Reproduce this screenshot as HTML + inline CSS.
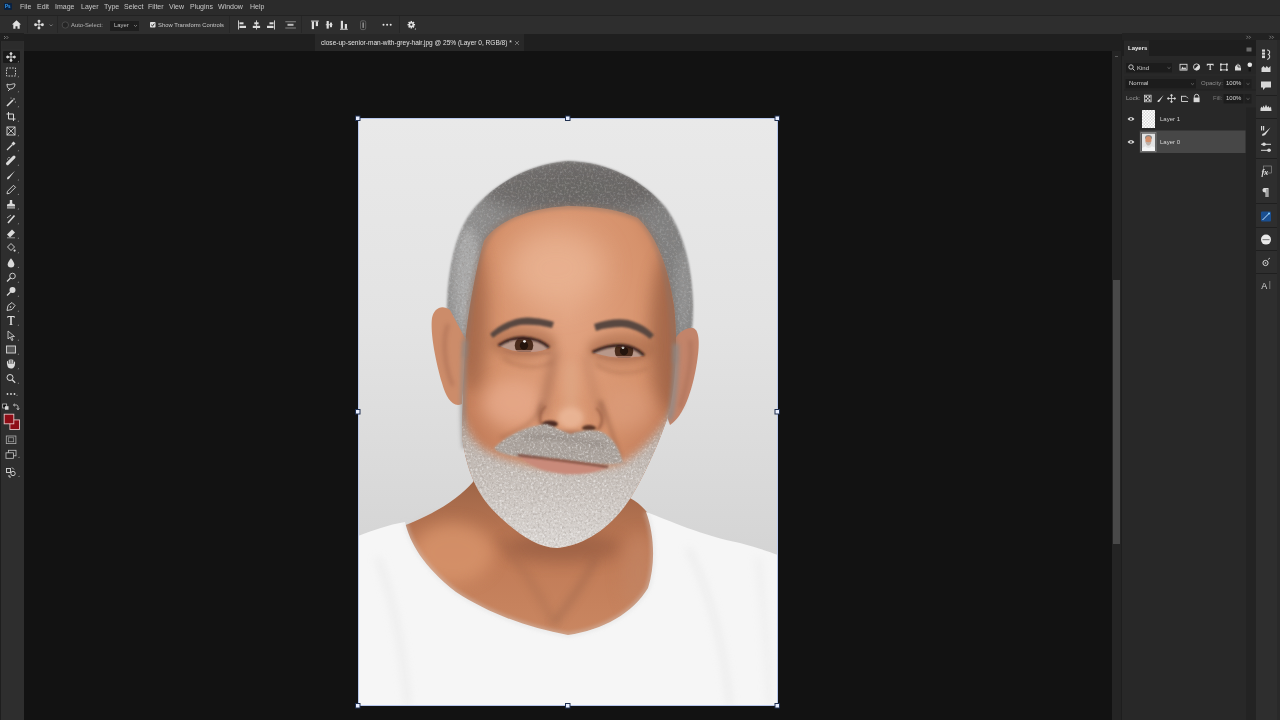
<!DOCTYPE html>
<html><head><meta charset="utf-8">
<style>
*{margin:0;padding:0;box-sizing:border-box}
html,body{width:1280px;height:720px;overflow:hidden;background:#121212;font-family:"Liberation Sans",sans-serif;color:#d6d6d6}
.a{position:absolute}
.t{position:absolute;white-space:nowrap;line-height:8px;will-change:transform}
#menubar{left:0;top:0;width:1280px;height:15px;background:#2b2b2b}
#menubar .t{top:3px;font-size:7px;color:#c8c8c8}
#opts{left:0;top:15px;width:1280px;height:19px;background:#2e2e2e;border-top:1px solid #222222}
#opts .t{font-size:5.85px;color:#c8c8c8}
.sep{position:absolute;top:0px;width:1px;height:17px;background:#262626}
#tabbar{left:24px;top:34px;width:1098px;height:17px;background:#1f1f1f}
#tab{left:315px;top:34px;width:209px;height:17px;background:#282828}
#tools{left:0;top:34px;width:24px;height:686px;background:#2e2e2e;border-left:1px solid #1e1e1e}
#canvas{left:24px;top:51px;width:1088px;height:669px;background:#121212}
#vscroll{left:1112px;top:51px;width:10px;height:669px;background:#242424}
#panel{left:1122px;top:33px;width:134px;height:687px;background:#282828}
#strip{left:1256px;top:33px;width:24px;height:687px;background:#2a2a2a}
#photo{left:358px;top:118px;width:420px;height:588px;overflow:hidden}
svg{display:block}
</style></head><body>
<div id="menubar" class="a">
<div class="a" style="left:4px;top:3px;width:8px;height:7px;background:#0a2140;border-radius:1px"></div>
<div class="t" style="left:5px;top:3px;font-size:4.5px;color:#36a4ff;font-weight:bold;line-height:7px">Ps</div>
<div class="t" style="left:20px">File</div>
<div class="t" style="left:37px">Edit</div>
<div class="t" style="left:55px">Image</div>
<div class="t" style="left:81px">Layer</div>
<div class="t" style="left:103.5px">Type</div>
<div class="t" style="left:123.5px">Select</div>
<div class="t" style="left:147.5px">Filter</div>
<div class="t" style="left:168.5px">View</div>
<div class="t" style="left:189.5px">Plugins</div>
<div class="t" style="left:218px">Window</div>
<div class="t" style="left:249.5px">Help</div>
</div>
<div id="opts" class="a">
<svg class="a" style="left:0;top:-1px" width="430" height="19" viewBox="0 15 430 19">
<g fill="#e0e0e0">
<path d="M16.5 20.3 L12 24.6 L13.3 24.6 L13.3 28.8 L15.5 28.8 L15.5 26.2 L17.5 26.2 L17.5 28.8 L19.7 28.8 L19.7 24.6 L21 24.6 Z"/>
</g>
<g stroke="#dcdcdc" stroke-width="1.1" fill="#dcdcdc">
<line x1="35.3" y1="24.7" x2="42.7" y2="24.7" stroke-width="0.9"/><line x1="39" y1="21" x2="39" y2="28.4" stroke-width="0.9"/>
<circle cx="39" cy="21.3" r="0.9"/><circle cx="39" cy="28.1" r="0.9"/><circle cx="35.6" cy="24.7" r="0.9"/><circle cx="42.4" cy="24.7" r="0.9"/>
</g>
<path d="M49.6 24.5 L51.1 26 L52.6 24.5" stroke="#8a8a8a" stroke-width="0.8" fill="none"/>
<circle cx="65.3" cy="25" r="3.2" stroke="#4a4a4a" stroke-width="1" fill="#242424"/>
<rect x="110" y="21" width="29" height="10" fill="#1e1e1e"/>
<path d="M134 25 L135.5 26.5 L137 25" stroke="#8a8a8a" stroke-width="0.8" fill="none"/>
<rect x="150" y="22" width="5.5" height="5.6" rx="0.8" fill="#e0e0e0"/>
<path d="M151.2 24.8 L152.5 26.1 L154.3 23.6" stroke="#2a2a2a" stroke-width="1" fill="none"/>
<g fill="#dcdcdc">
<rect x="238" y="20.4" width="0.9" height="9.1"/><rect x="239.5" y="22.3" width="4" height="2"/><rect x="239.5" y="25.8" width="6.5" height="2.2"/>
<rect x="256" y="20.4" width="0.9" height="9.1"/><rect x="254.3" y="22.3" width="4.3" height="2"/><rect x="252.8" y="25.8" width="7.3" height="2.2"/>
<rect x="274" y="20.4" width="0.9" height="9.1"/><rect x="269.5" y="22.3" width="4" height="2"/><rect x="267" y="25.8" width="6.5" height="2.2"/>
<rect x="285.3" y="21.4" width="10.6" height="0.8" fill="#9a9a9a"/><rect x="285.3" y="27.6" width="10.6" height="0.8" fill="#9a9a9a"/><rect x="287.5" y="23.8" width="6" height="2" fill="#bdbdbd"/>
<rect x="311" y="20.6" width="7.8" height="0.9"/><rect x="311.8" y="21.5" width="2.2" height="7.6"/><rect x="315.8" y="21.5" width="2.2" height="4.6"/>
<rect x="325.8" y="24.3" width="6.8" height="0.9"/><rect x="326.6" y="21" width="2.2" height="7.6"/><rect x="330" y="22.6" width="2" height="4.6"/>
<rect x="340" y="28.8" width="7.8" height="0.9"/><rect x="340.8" y="20.8" width="2.2" height="8"/><rect x="344.8" y="24" width="2.2" height="4.8"/>
</g>
<rect x="360.5" y="20.8" width="5.2" height="8.8" rx="1.5" stroke="#6a6a6a" stroke-width="0.8" fill="none"/>
<rect x="362.4" y="22.5" width="1.6" height="5.4" fill="#8a8a8a"/>
<g fill="#e4e4e4"><circle cx="383.5" cy="24.7" r="1"/><circle cx="387.1" cy="24.7" r="1"/><circle cx="390.7" cy="24.7" r="1"/></g>
<g transform="translate(411.3 24.7) scale(0.82)">
<circle r="3.2" fill="#e0e0e0"/>
<g fill="#e0e0e0"><rect x="-0.9" y="-4.6" width="1.8" height="9.2"/><rect x="-4.6" y="-0.9" width="9.2" height="1.8"/><rect x="-0.9" y="-4.6" width="1.8" height="9.2" transform="rotate(45)"/><rect x="-0.9" y="-4.6" width="1.8" height="9.2" transform="rotate(-45)"/></g>
<circle r="1.4" fill="#2a2a2a"/>
</g>
<path d="M414.5 29.6 L416 29.6 L416 28.1 Z" fill="#d0d0d0"/>
</svg>
<div class="sep" style="left:27px"></div>
<div class="sep" style="left:57px"></div>
<div class="sep" style="left:229px"></div>
<div class="sep" style="left:301px"></div>
<div class="sep" style="left:399px"></div>
<div class="t" style="left:71px;top:4.5px;color:#b4b4b4">Auto-Select:</div>
<div class="t" style="left:113.5px;top:4.5px;color:#c0c0c0">Layer</div>
<div class="t" style="left:158px;top:4.5px">Show Transform Controls</div>
</div>
<div id="tools" class="a"><svg class="a" style="left:-1px;top:-34px" width="24" height="720" viewBox="0 0 24 720"><rect x="0" y="33" width="24" height="8" fill="#202020"/><path d="M4 36 L5.5 37.5 L4 39 M6.5 36 L8 37.5 L6.5 39" stroke="#9a9a9a" stroke-width="0.7" fill="none"/><rect x="2" y="41" width="21" height="8" fill="#2c2c2c"/><rect x="3" y="51" width="17" height="12" fill="#1a1a1a" rx="1"/><g transform="translate(11 57)"><g stroke="#dadada" stroke-width="0.9" fill="#dadada"><line x1="-3.6" y1="0" x2="3.6" y2="0"/><line x1="0" y1="-3.6" x2="0" y2="3.6"/><circle cx="0" cy="-3.4" r="1"/><circle cx="0" cy="3.4" r="1"/><circle cx="-3.4" cy="0" r="1"/><circle cx="3.4" cy="0" r="1"/></g></g><g transform="translate(11 72)"><rect x="-4.5" y="-4" width="9" height="8" stroke="#dadada" stroke-width="0.9" stroke-dasharray="1.6 1.2" fill="none"/></g><g transform="translate(11 87)"><path d="M-4 -3 C-1 -1 2 -4 4 -3 C4 0 2 2 -1 2 C-3 2 -4 0 -4 -3 M-1 2 L-3 4" stroke="#dadada" stroke-width="0.9" fill="none"/></g><g transform="translate(11 102)"><path d="M-4 4 L2 -2" stroke="#dadada" stroke-width="1.6"/><g fill="#dadada"><circle cx="3" cy="-3" r="0.8"/><circle cx="0" cy="-4" r="0.5"/><circle cx="4.3" cy="0" r="0.5"/></g></g><g transform="translate(11 116.5)"><path d="M-2.5 -4.5 L-2.5 2.5 L4.5 2.5 M-4.5 -2.5 L2.5 -2.5 L2.5 4.5" stroke="#dadada" stroke-width="1" fill="none"/></g><g transform="translate(11 131)"><rect x="-4" y="-4" width="8" height="8" stroke="#dadada" stroke-width="0.9" fill="none"/><path d="M-4 -4 L4 4 M4 -4 L-4 4" stroke="#dadada" stroke-width="0.8"/></g><g transform="translate(11 146)"><path d="M-4 4 L1.5 -1.5" stroke="#dadada" stroke-width="1.2"/><path d="M0.5 -2.5 L2.5 -4.5 L4.5 -2.5 L2.5 -0.5 Z" fill="#dadada"/></g><g transform="translate(11 160.6)"><path d="M-3.5 3 L3 -3.5" stroke="#dadada" stroke-width="3" stroke-linecap="round"/><circle cx="-2" cy="-3" r="0.7" fill="#dadada"/><circle cx="-3.5" cy="-1.5" r="0.5" fill="#dadada"/></g><g transform="translate(11 175.2)"><path d="M-4 4 C-4 2 -3 1 -2 1 L4 -4.5 L-1 2 C-1.5 3.5 -3 4.3 -4 4 Z" fill="#dadada"/></g><g transform="translate(11 189.8)"><path d="M-4 4 L-3.5 1.5 L2.5 -4.5 L4.5 -2.5 L-1.5 3.5 Z" stroke="#dadada" stroke-width="0.9" fill="none"/></g><g transform="translate(11 204.4)"><path d="M-1.2 -4.5 L1.2 -4.5 L1.2 -1 L4 0 L4 2 L-4 2 L-4 0 L-1.2 -1 Z" fill="#dadada"/><rect x="-4" y="3" width="8" height="1" fill="#dadada"/></g><g transform="translate(11 219)"><path d="M-3 4 L3.5 -3.5" stroke="#dadada" stroke-width="1.6"/><path d="M-4 -1 L0 -4" stroke="#dadada" stroke-width="0.8"/></g><g transform="translate(11 233.5)"><path d="M-4 2 L1 -3 L4 0 L-1 5 Z" fill="#dadada" transform="translate(0 -1)"/><line x1="-4" y1="4.3" x2="4" y2="4.3" stroke="#dadada" stroke-width="0.6"/></g><g transform="translate(11 248)"><path d="M-3.5 -1 L0 -4.5 L3.5 -1 L0 2.5 Z" stroke="#dadada" stroke-width="0.9" fill="none"/><circle cx="3.6" cy="2.6" r="1.1" fill="#dadada"/></g><g transform="translate(11 262.7)"><path d="M0 -4.5 C2 -2 3.3 0 3.3 1.5 A3.3 3.3 0 0 1 -3.3 1.5 C-3.3 0 -2 -2 0 -4.5 Z" fill="#dadada"/></g><g transform="translate(11 277.5)"><circle cx="1.5" cy="-1.5" r="2.8" stroke="#dadada" stroke-width="0.9" fill="none"/><path d="M-4 4 L-0.5 0.5" stroke="#dadada" stroke-width="1.2"/></g><g transform="translate(11 291.5)"><circle cx="1.5" cy="-1.5" r="3" fill="#dadada"/><path d="M-4 4 L-0.5 0.5" stroke="#dadada" stroke-width="1.2"/></g><g transform="translate(11 306.5)"><path d="M-4 4 L-3 -1 L1 -4 L4 -1 L1 3 Z" stroke="#dadada" stroke-width="0.9" fill="none"/><circle cx="-0.5" cy="0.5" r="0.8" fill="#dadada"/></g><g transform="translate(11 320.5)"><path d="M-3.6 -4.5 L3.6 -4.5 L3.6 -2.6 L3 -2.6 L2.6 -3.5 L0.8 -3.5 L0.8 3.8 L1.8 4.2 L1.8 4.6 L-1.8 4.6 L-1.8 4.2 L-0.8 3.8 L-0.8 -3.5 L-2.6 -3.5 L-3 -2.6 L-3.6 -2.6 Z" fill="#dadada"/></g><g transform="translate(11 335.5)"><path d="M-3 -4.5 L3.5 1 L0.5 1 L2 4.5 L0.8 5 L-0.8 1.5 L-3 3.5 Z" stroke="#dadada" stroke-width="0.8" fill="#333"/></g><g transform="translate(11 349.5)"><rect x="-4.5" y="-3.5" width="9" height="7" stroke="#dadada" stroke-width="0.9" fill="#555"/></g><g transform="translate(11 364)"><path d="M-3.5 0 L-3.5 -2.5 M-1.7 -1 L-1.7 -4 M0 -1 L0 -4.5 M1.7 -1 L1.7 -4 M3.5 0 L3.5 -2" stroke="#dadada" stroke-width="1.1" stroke-linecap="round"/><path d="M-3.8 -0.5 L3.8 -0.5 L3.8 1.5 C3 4 1.5 4.5 0 4.5 C-2 4.5 -3.5 3.5 -3.8 1 Z" fill="#dadada"/></g><g transform="translate(11 378.5)"><circle cx="-1" cy="-1" r="3" stroke="#dadada" stroke-width="1" fill="none"/><path d="M1.2 1.2 L4.2 4.2" stroke="#dadada" stroke-width="1.3"/></g><path d="M17.5 62.2 L19 62.2 L19 60.7 Z" fill="#8a8a8a"/><path d="M17.5 77.2 L19 77.2 L19 75.7 Z" fill="#8a8a8a"/><path d="M17.5 92.2 L19 92.2 L19 90.7 Z" fill="#8a8a8a"/><path d="M17.5 107.2 L19 107.2 L19 105.7 Z" fill="#8a8a8a"/><path d="M17.5 121.7 L19 121.7 L19 120.2 Z" fill="#8a8a8a"/><path d="M17.5 136.2 L19 136.2 L19 134.7 Z" fill="#8a8a8a"/><path d="M17.5 151.2 L19 151.2 L19 149.7 Z" fill="#8a8a8a"/><path d="M17.5 165.79999999999998 L19 165.79999999999998 L19 164.29999999999998 Z" fill="#8a8a8a"/><path d="M17.5 180.39999999999998 L19 180.39999999999998 L19 178.89999999999998 Z" fill="#8a8a8a"/><path d="M17.5 195.0 L19 195.0 L19 193.5 Z" fill="#8a8a8a"/><path d="M17.5 209.6 L19 209.6 L19 208.1 Z" fill="#8a8a8a"/><path d="M17.5 224.2 L19 224.2 L19 222.7 Z" fill="#8a8a8a"/><path d="M17.5 238.7 L19 238.7 L19 237.2 Z" fill="#8a8a8a"/><path d="M17.5 253.2 L19 253.2 L19 251.7 Z" fill="#8a8a8a"/><path d="M17.5 267.9 L19 267.9 L19 266.4 Z" fill="#8a8a8a"/><path d="M17.5 282.7 L19 282.7 L19 281.2 Z" fill="#8a8a8a"/><path d="M17.5 296.7 L19 296.7 L19 295.2 Z" fill="#8a8a8a"/><path d="M17.5 311.7 L19 311.7 L19 310.2 Z" fill="#8a8a8a"/><path d="M17.5 325.7 L19 325.7 L19 324.2 Z" fill="#8a8a8a"/><path d="M17.5 340.7 L19 340.7 L19 339.2 Z" fill="#8a8a8a"/><path d="M17.5 354.7 L19 354.7 L19 353.2 Z" fill="#8a8a8a"/><path d="M17.5 369.2 L19 369.2 L19 367.7 Z" fill="#8a8a8a"/><path d="M17.5 383.7 L19 383.7 L19 382.2 Z" fill="#8a8a8a"/><g fill="#dadada"><circle cx="7.5" cy="394" r="0.9"/><circle cx="11" cy="394" r="0.9"/><circle cx="14.5" cy="394" r="0.9"/></g><path d="M16 396 L17.5 396 L17.5 394.5 Z" fill="#8a8a8a"/><rect x="2.7" y="404" width="4" height="4" fill="#111" stroke="#dadada" stroke-width="0.7"/><rect x="5" y="406.2" width="3.5" height="3.5" fill="#dadada"/><path d="M13.5 405 L16.5 405 C17.5 405 18 406 18 407 L18 409.5 M16.8 408.3 L18 409.8 L19.2 408.3 M14.8 403.8 L13.5 405 L14.8 406.2" stroke="#dadada" stroke-width="0.8" fill="none"/><rect x="9.9" y="419.9" width="9.6" height="9.6" fill="#8e0c16" stroke="#e6c2c4" stroke-width="0.9"/><rect x="4.2" y="414.2" width="9.6" height="9.6" fill="#8e0c16" stroke="#e6c2c4" stroke-width="0.9"/><rect x="6.3" y="436" width="9.6" height="7.6" stroke="#b0b0b0" stroke-width="0.8" fill="none"/><rect x="8.5" y="437.8" width="5.2" height="4" stroke="#b0b0b0" stroke-width="0.6" fill="none"/><rect x="8.5" y="450.3" width="7.5" height="5.5" stroke="#c8c8c8" stroke-width="0.8" fill="#262626"/><rect x="6" y="452.8" width="7.5" height="5.5" stroke="#c8c8c8" stroke-width="0.8" fill="#262626"/><path d="M18 458 L19.5 458 L19.5 456.5 Z" fill="#8a8a8a"/><g stroke="#dadada" stroke-width="0.9" fill="none"><rect x="6.5" y="468.5" width="4" height="4"/><circle cx="13" cy="473.5" r="2.2"/><path d="M9 475 L9 477 L11 477"/><path d="M12 467.5 L14 469.5"/></g><path d="M18 477 L19.5 477 L19.5 475.5 Z" fill="#8a8a8a"/></svg></div>
<div id="tabbar" class="a"></div>
<div id="tab" class="a">
<div class="t" style="left:5.5px;top:5px;font-size:6.55px;color:#e2e2e2">close-up-senior-man-with-grey-hair.jpg @ 25% (Layer 0, RGB/8) *</div>
<svg class="a" style="left:199px;top:6px" width="6" height="6"><path d="M1 1 L5 5 M5 1 L1 5" stroke="#8a8a8a" stroke-width="0.8"/></svg>
</div>
<div id="canvas" class="a"></div>
<div id="vscroll" class="a">
<div class="a" style="left:0.5px;top:228.5px;width:7px;height:264px;background:#494949"></div><div class="a" style="left:8.5px;top:-17px;width:1.5px;height:686px;background:#1e1e1e"></div>
<div class="a" style="left:3px;top:5px;width:3px;height:1px;background:#5a5a5a"></div>
</div>
<div id="panel" class="a">
<svg class="a" style="left:0;top:0" width="134" height="687" viewBox="1122 33 134 687">
<rect x="1122" y="33" width="134" height="7" fill="#222222"/>
<path d="M1246.5 35.8 L1248 37.3 L1246.5 38.8 M1249 35.8 L1250.5 37.3 L1249 38.8" stroke="#9a9a9a" stroke-width="0.7" fill="none"/>
<rect x="1122" y="40" width="134" height="16" fill="#1e1e1e"/>
<rect x="1124" y="40.5" width="25" height="15.5" fill="#282828"/>
<rect x="1246.5" y="47.5" width="5" height="4" fill="#6a6a6a"/>
<rect x="1124" y="60" width="132" height="14" fill="#262626"/>
<rect x="1126" y="63" width="46" height="9.5" fill="#1c1c1c"/>
<circle cx="1131" cy="67" r="2.2" stroke="#cfcfcf" stroke-width="0.9" fill="none"/><path d="M1132.6 68.6 L1134.5 70.5" stroke="#cfcfcf" stroke-width="1"/>
<path d="M1167.5 67.3 L1169 68.6 L1170.5 67.3" stroke="#777" stroke-width="0.7" fill="none"/>
<g fill="none" stroke="#d8d8d8" stroke-width="0.9">
<rect x="1180" y="64.3" width="7" height="5.8"/>
<circle cx="1196.6" cy="67" r="3.1"/>
<rect x="1220.8" y="64.3" width="6" height="5.6"/>
</g>
<path d="M1181 69.5 L1182.5 66.5 L1184 68.5 L1185 67 L1186.5 69.5 Z" fill="#d8d8d8"/>
<path d="M1194.4 69.2 L1198.8 64.8 A3.1 3.1 0 0 1 1194.4 69.2 Z" fill="#d8d8d8"/>
<path d="M1206.8 63.8 L1213.6 63.8 L1213.6 65.8 L1212.8 65.8 L1212.6 64.9 L1210.8 64.9 L1210.8 69.6 L1211.8 70 L1208.6 70 L1209.6 69.6 L1209.6 64.9 L1207.8 64.9 L1207.6 65.8 L1206.8 65.8 Z" fill="#d8d8d8"/>
<g fill="#d8d8d8"><rect x="1220" y="63.5" width="1.8" height="1.8"/><rect x="1226" y="63.5" width="1.8" height="1.8"/><rect x="1220" y="69" width="1.8" height="1.8"/><rect x="1226" y="69" width="1.8" height="1.8"/></g>
<path d="M1235 70.5 L1235 66.5 L1238 63.5 L1241 66.5 L1241 70.5 Z" fill="#d8d8d8"/><path d="M1238 63.5 L1238 67 L1241 67" stroke="#262626" stroke-width="0.8" fill="none"/>
<circle cx="1249.8" cy="64.8" r="2.3" fill="#e6e6e6"/><rect x="1248.6" y="67.5" width="2.4" height="4" fill="#141414"/>
<rect x="1124" y="76" width="132" height="13" fill="#262626"/>
<rect x="1125.5" y="79" width="70.5" height="9.5" fill="#1c1c1c"/>
<path d="M1191 83.3 L1192.5 84.6 L1194 83.3" stroke="#777" stroke-width="0.7" fill="none"/>
<rect x="1223.5" y="79" width="20" height="9.5" fill="#1c1c1c"/>
<rect x="1244.5" y="79" width="7" height="9.5" fill="#1f1f1f"/>
<path d="M1246.5 83.3 L1248 84.6 L1249.5 83.3" stroke="#777" stroke-width="0.7" fill="none"/>
<rect x="1124" y="89.5" width="132" height="0.8" fill="#1e1e1e"/>
<rect x="1223.5" y="94" width="20" height="9.5" fill="#1c1c1c"/>
<rect x="1244.5" y="94" width="7" height="9.5" fill="#1f1f1f"/>
<path d="M1246.5 98.3 L1248 99.6 L1249.5 98.3" stroke="#777" stroke-width="0.7" fill="none"/>
<g fill="#d8d8d8">
<rect x="1144.5" y="95.2" width="6.6" height="6.6" fill="none" stroke="#d8d8d8" stroke-width="0.8"/>
<rect x="1145.3" y="96" width="1.7" height="1.7"/><rect x="1148.6" y="96" width="1.7" height="1.7"/><rect x="1147" y="97.7" width="1.7" height="1.7"/><rect x="1145.3" y="99.3" width="1.7" height="1.7"/><rect x="1148.6" y="99.3" width="1.7" height="1.7"/>
</g>
<path d="M1157.5 102 C1157.5 100.5 1158.3 99.8 1159 99.8 L1163.6 95 L1160 100.8 C1159.6 101.9 1158.6 102.3 1157.5 102 Z" fill="#d8d8d8"/>
<g stroke="#d8d8d8" stroke-width="0.8" fill="#d8d8d8"><line x1="1168" y1="98.5" x2="1175" y2="98.5"/><line x1="1171.5" y1="95" x2="1171.5" y2="102"/><circle cx="1168.3" cy="98.5" r="0.8"/><circle cx="1174.7" cy="98.5" r="0.8"/><circle cx="1171.5" cy="95.3" r="0.8"/><circle cx="1171.5" cy="101.7" r="0.8"/></g>
<path d="M1181.5 96 L1181.5 101.5 L1188 101.5 M1181 96.3 L1186 96.3 L1188 98.3" stroke="#d8d8d8" stroke-width="0.9" fill="none"/>
<path d="M1194.4 97.8 L1194.4 96.5 A2.2 2.2 0 0 1 1198.8 96.5 L1198.8 97.8" stroke="#d8d8d8" stroke-width="0.9" fill="none"/><rect x="1193.6" y="97.6" width="6" height="4.6" fill="#d8d8d8"/>
<rect x="1124" y="107.5" width="122" height="612.5" fill="#282828"/>
<rect x="1139.7" y="130.5" width="105.8" height="22.5" fill="#474747"/>
<rect x="1246" y="107.5" width="10" height="612.5" fill="#232323"/>
<g fill="#d8d8d8">
<path d="M1127.6 119 C1129 116.8 1133 116.8 1134.4 119 C1133 121.2 1129 121.2 1127.6 119 Z"/>
<path d="M1127.6 142 C1129 139.8 1133 139.8 1134.4 142 C1133 144.2 1129 144.2 1127.6 142 Z"/>
</g>
<circle cx="1131" cy="119" r="1.1" fill="#282828"/><circle cx="1131" cy="142" r="1.1" fill="#474747"/>
<defs><pattern id="chk" width="3" height="3" patternUnits="userSpaceOnUse" x="1142" y="110"><rect width="3" height="3" fill="#ffffff"/><rect width="1.5" height="1.5" fill="#d8d8d8"/><rect x="1.5" y="1.5" width="1.5" height="1.5" fill="#d8d8d8"/></pattern></defs>
<rect x="1142" y="110" width="13" height="18" fill="url(#chk)"/>
<rect x="1140.8" y="132.6" width="15.2" height="19.2" fill="none" stroke="#8a8a8a" stroke-width="0.8"/>
<rect x="1142" y="133.6" width="13" height="17.4" fill="#e2e2e2"/>
<ellipse cx="1148.5" cy="137.6" rx="3.4" ry="2.6" fill="#858585"/>
<ellipse cx="1148.4" cy="140.2" rx="3" ry="4" fill="#d28e6a"/>
<path d="M1145.6 141.5 C1146 144.5 1147.5 145.6 1148.3 145.6 C1149.3 145.6 1150.8 144.5 1151.2 141.5 C1150 142.6 1147 142.6 1145.6 141.5 Z" fill="#bab2ac"/>
<path d="M1142 148 L1145.5 146.3 C1146.5 148.5 1150.5 148.5 1151.5 146.3 L1155 147.5 L1155 151 L1142 151 Z" fill="#f4f4f4"/>
</svg>
<div class="t" style="left:5.5px;top:11px;font-size:6px;color:#ececec;font-weight:bold">Layers</div>
<div class="t" style="left:14.5px;top:30.5px;font-size:6px;color:#cfcfcf">Kind</div>
<div class="t" style="left:6.5px;top:46px;font-size:6px;color:#d0d0d0">Normal</div>
<div class="t" style="left:79px;top:46px;font-size:6px;color:#8e8e8e">Opacity:</div>
<div class="t" style="left:104px;top:46px;font-size:6px;color:#d6d6d6">100%</div>
<div class="t" style="left:4px;top:61px;font-size:6px;color:#9a9a9a">Lock:</div>
<div class="t" style="left:91px;top:61px;font-size:6px;color:#7a7a7a">Fill:</div>
<div class="t" style="left:104px;top:61px;font-size:6px;color:#d6d6d6">100%</div>
<div class="t" style="left:38px;top:82px;font-size:6px;color:#d0d0d0">Layer 1</div>
<div class="t" style="left:38px;top:105px;font-size:6px;color:#d8d8d8">Layer 0</div>
</div>
<div id="strip" class="a">
<svg class="a" style="left:0;top:0;will-change:transform" width="24" height="687" viewBox="1256 33 24 687">
<rect x="1256" y="33" width="24" height="7" fill="#222222"/>
<path d="M1269.5 35.8 L1271 37.3 L1269.5 38.8 M1272 35.8 L1273.5 37.3 L1272 38.8" stroke="#9a9a9a" stroke-width="0.7" fill="none"/>
<rect x="1256" y="40" width="21.5" height="680" fill="#2e2e2e"/>
<rect x="1277.5" y="40" width="2.5" height="680" fill="#292929"/>
<g fill="#1f1f1f"><rect x="1256" y="95" width="21" height="1"/><rect x="1256" y="118" width="21" height="1"/><rect x="1256" y="158" width="21" height="1"/><rect x="1256" y="203" width="21" height="1"/><rect x="1256" y="227" width="21" height="1"/><rect x="1256" y="250" width="21" height="1"/><rect x="1256" y="273" width="21" height="1"/></g>
<g fill="#d8d8d8">
<rect x="1262" y="49.5" width="3" height="2.2"/><rect x="1262" y="52.5" width="3" height="2.2"/><rect x="1262" y="55.5" width="3" height="2.6"/>
<path d="M1267 50 C1270 50 1270.5 53 1268.5 54.5 C1270.5 55.5 1270 59 1267.2 59.5" stroke="#d8d8d8" stroke-width="1.1" fill="none"/>
<path d="M1261.5 72 L1261.5 68 L1263.5 66 L1265.2 68 L1266.8 66 L1268.5 68 L1270.5 66 L1270.5 72 Z"/>
<path d="M1261 81.5 L1271 81.5 L1271 87.5 L1265.5 87.5 L1263 90 L1263 87.5 L1261 87.5 Z"/>
<path d="M1260.5 111 L1260.5 108.5 L1261.5 106.5 L1262.5 108 L1263.5 105.5 L1264.7 107.8 L1266 104.5 L1267.3 107.5 L1268.5 106 L1269.7 108 L1271 106.5 L1271.5 111 Z"/>
<rect x="1261" y="126" width="1.2" height="4.5"/><rect x="1263" y="126" width="1.2" height="4.5"/>
<path d="M1262 135.5 C1262 134 1263 133.2 1264 133.2 L1270.5 127.5 L1265.5 134.5 C1265 135.5 1263.5 136 1262 135.5 Z"/>
<rect x="1261" y="143.8" width="10" height="1"/><circle cx="1264" cy="144.3" r="1.8"/>
<rect x="1261" y="149.8" width="10" height="1"/><circle cx="1269" cy="150.3" r="1.8"/>
</g>
<rect x="1263.5" y="166" width="8" height="7" fill="none" stroke="#9a9a9a" stroke-width="0.6"/><text x="1261.5" y="175" font-family="Liberation Serif" font-style="italic" font-weight="bold" font-size="8" fill="#e0e0e0">fx</text>
<path d="M1264 188 L1268.5 188 L1268.5 197 L1267.3 197 L1267.3 189 L1266.7 189 L1266.7 197 L1265.5 197 L1265.5 192.5 C1263.5 192.5 1262.5 191.5 1262.5 190.2 C1262.5 189 1263.3 188 1264 188 Z" fill="#d8d8d8"/>
<rect x="1261" y="211.5" width="10" height="10" rx="1" fill="#1a4f90"/>
<path d="M1262.5 220 L1269.5 213" stroke="#bfe0ff" stroke-width="1"/><circle cx="1269" cy="213.6" r="1" fill="#7fd0ff"/>
<circle cx="1266" cy="239.6" r="5" fill="#e8e8e8"/>
<rect x="1262.5" y="239" width="7" height="1.2" fill="#888"/>
<circle cx="1265.5" cy="263" r="2.6" stroke="#d8d8d8" stroke-width="1" fill="none"/><circle cx="1265.5" cy="263" r="0.8" fill="#d8d8d8"/>
<path d="M1268 259.5 L1270 258" stroke="#d8d8d8" stroke-width="0.8"/>
<text x="1261.3" y="289" font-family="Liberation Sans" font-size="9" fill="#d8d8d8">A</text>
<rect x="1269.5" y="281" width="0.7" height="8" fill="#999"/>
</svg>
</div>
<div id="photo" class="a">
<svg width="420" height="588" viewBox="0 0 420 588">
<defs>
<linearGradient id="bg" x1="0" y1="0" x2="0" y2="1">
<stop offset="0" stop-color="#e9e9e9"/><stop offset="0.35" stop-color="#e3e3e3"/><stop offset="0.6" stop-color="#dadada"/><stop offset="0.8" stop-color="#d2d2d2"/><stop offset="1" stop-color="#c8c8c8"/>
</linearGradient>
<radialGradient id="skin" cx="0.5" cy="0.32" r="0.7">
<stop offset="0" stop-color="#e2a482"/><stop offset="0.55" stop-color="#d6926c"/><stop offset="1" stop-color="#b46e4e"/>
</radialGradient>
<linearGradient id="neckg" x1="0" y1="0" x2="0" y2="1">
<stop offset="0" stop-color="#9c6446"/><stop offset="0.4" stop-color="#c07a56"/><stop offset="1" stop-color="#cc8a64"/>
</linearGradient>
<linearGradient id="beardg" x1="0" y1="0" x2="0" y2="1">
<stop offset="0" stop-color="#b0a094"/><stop offset="0.4" stop-color="#c2bab4"/><stop offset="1" stop-color="#dedad7"/>
</linearGradient>
<linearGradient id="hairg" x1="0" y1="0" x2="1" y2="0">
<stop offset="0" stop-color="#949494"/><stop offset="0.5" stop-color="#7c7a79"/><stop offset="1" stop-color="#828282"/>
</linearGradient>
<filter id="b1" filterUnits="userSpaceOnUse" x="-50" y="-50" width="520" height="688"><feGaussianBlur stdDeviation="0.8"/></filter>
<filter id="b2" filterUnits="userSpaceOnUse" x="-50" y="-50" width="520" height="688"><feGaussianBlur stdDeviation="2"/></filter>
<filter id="b4" filterUnits="userSpaceOnUse" x="-50" y="-50" width="520" height="688"><feGaussianBlur stdDeviation="4"/></filter>
<filter id="b8" filterUnits="userSpaceOnUse" x="-50" y="-50" width="520" height="688"><feGaussianBlur stdDeviation="8"/></filter>
<filter id="b14" filterUnits="userSpaceOnUse" x="-50" y="-50" width="520" height="688"><feGaussianBlur stdDeviation="14"/></filter>
<filter id="texW" filterUnits="userSpaceOnUse" x="0" y="0" width="420" height="588">
<feTurbulence type="fractalNoise" baseFrequency="0.45" numOctaves="2" seed="3"/>
<feColorMatrix type="matrix" values="0 0 0 0 1  0 0 0 0 1  0 0 0 0 1  2.2 0 0 0 -1.05"/>
<feComposite in2="SourceAlpha" operator="in"/>
</filter>
<filter id="texD" filterUnits="userSpaceOnUse" x="0" y="0" width="420" height="588">
<feTurbulence type="fractalNoise" baseFrequency="0.45" numOctaves="2" seed="7"/>
<feColorMatrix type="matrix" values="0 0 0 0 0.25  0 0 0 0 0.22  0 0 0 0 0.2  2.2 0 0 0 -1.05"/>
<feComposite in2="SourceAlpha" operator="in"/>
</filter>
<clipPath id="hairclip"><path d="M100 272 C94 240 88 205 89 185 C90 150 98 110 118 88 C140 64 172 46 210 43 C250 44 285 62 308 90 C326 115 334 150 335 188 C335 215 330 250 320 286 L300 290 L120 290 Z"/></clipPath>
<clipPath id="faceclip"><path d="M210 88 C172 90 140 102 126 123 C118 150 112 185 108 216 C106 250 104 290 104 318 C108 350 118 378 143 400 C160 416 180 430 199 430 C225 428 255 410 275 376 C290 350 302 322 311 296 C318 262 320 225 316 188 C310 150 300 120 280 100 C262 92 240 88 210 88 Z"/></clipPath>
<clipPath id="neckclip"><path d="M40 405 L112 350 L288 375 L296 394 C298 430 296 455 290 470 C275 495 245 512 210 517 C170 510 130 495 98 474 C65 448 52 425 47 404 Z"/></clipPath>
<clipPath id="beardclip"><path d="M104 296 C108 340 118 372 143 400 C160 416 180 430 199 430 C225 428 255 410 275 376 C290 345 300 320 310 288 L310 460 L100 460 Z"/></clipPath>
<clipPath id="beardshape"><path d="M100 290 C115 315 135 330 160 338 C185 350 230 352 262 340 C280 330 295 310 312 285 L312 460 L100 460 Z"/></clipPath>
<clipPath id="mclip"><path d="M136 330 C148 318 168 308 188 306 C198 309 205 314 213 316 C222 313 234 310 246 315 C256 321 262 332 265 345 C245 348 225 345 205 342 C185 340 165 340 150 337 C142 335 138 333 136 330 Z"/></clipPath>
<mask id="beardmask" maskUnits="userSpaceOnUse" x="0" y="0" width="420" height="588">
<path d="M96 300 C112 325 132 338 160 344 C185 352 230 354 262 346 C282 336 298 316 316 292 L316 460 L96 460 Z" fill="#fff" filter="url(#b4)"/>
<path d="M98 290 C108 300 118 320 122 345 L100 350 Z" fill="#fff" opacity="0.5" filter="url(#b4)"/>
</mask>
<clipPath id="eyeL"><path d="M140.5 227.5 C150 221 160 219.5 166 219.8 C176 220.5 185 224 191 229.5 C185 233.5 176 234 166 233.8 C156 233.5 148 231 140.5 227.5 Z"/></clipPath>
<clipPath id="eyeR"><path d="M234.5 234.2 C245 229 255 227 263 227.2 C273 228 281 232 286 237.3 C279 239.5 270 239.8 261 239.6 C251 239 242 237 234.5 234.2 Z"/></clipPath>
</defs>
<rect width="420" height="588" fill="url(#bg)"/>
<!-- hair -->
<path d="M100 272 C94 240 88 205 89 185 C90 150 98 110 118 88 C140 64 172 46 210 43 C250 44 285 62 308 90 C326 115 334 150 335 188 C335 215 330 250 320 286 L300 290 L120 290 Z" fill="url(#hairg)" filter="url(#b1)"/>
<g clip-path="url(#hairclip)">
<ellipse cx="110" cy="165" rx="14" ry="55" fill="#b6b6b6" opacity="0.7" filter="url(#b4)"/>
<ellipse cx="215" cy="70" rx="95" ry="26" fill="#5e5c5a" opacity="0.65" filter="url(#b8)"/>
<ellipse cx="326" cy="175" rx="8" ry="45" fill="#a2a2a2" opacity="0.5" filter="url(#b4)"/>
<rect x="80" y="40" width="260" height="250" fill="#fff" filter="url(#texW)" opacity="0.25"/><rect x="80" y="40" width="260" height="250" fill="#fff" filter="url(#texD)" opacity="0.5"/>
</g>
<!-- ears -->
<path d="M104 286 C95 290 88 280 84 265 C78 245 72 215 74 200 C76 190 84 186 92 192 L108 222 Z" fill="#cc8c6a"/>
<path d="M90 206 C84 222 86 248 95 268" stroke="#a46850" stroke-width="3" fill="none" opacity="0.7" filter="url(#b2)"/>
<path d="M314 228 C317 216 327 209 335 210 C342 212 342 228 338 250 C334 272 326 298 312 307 L306 290 Z" fill="#c2846a"/>
<path d="M332 222 C335 240 330 262 322 290" stroke="#a06650" stroke-width="3" fill="none" opacity="0.6" filter="url(#b2)"/>
<!-- neck -->
<path d="M118 360 C105 378 80 395 40 410 L60 540 L300 540 C300 470 298 420 292 398 C286 390 280 384 272 380 Z" fill="url(#neckg)"/>
<g clip-path="url(#neckclip)">
<ellipse cx="205" cy="430" rx="60" ry="14" fill="#7a4a34" opacity="0.45" filter="url(#b8)"/>
<ellipse cx="95" cy="435" rx="40" ry="30" fill="#d8946c" opacity="0.8" filter="url(#b8)"/>
<ellipse cx="280" cy="455" rx="16" ry="40" fill="#c28464" opacity="0.7" filter="url(#b8)"/>
<path d="M238 440 C225 468 208 488 196 506" stroke="#8a5a44" stroke-width="5" fill="none" opacity="0.5" filter="url(#b4)"/>
<path d="M140 420 C160 445 180 470 195 505" stroke="#9a6448" stroke-width="6" fill="none" opacity="0.35" filter="url(#b4)"/>
</g>
<!-- face -->
<path d="M210 88 C172 90 140 102 126 123 C118 150 112 185 108 216 C106 250 104 290 104 318 C108 350 118 378 143 400 C160 416 180 430 199 430 C225 428 255 410 275 376 C290 350 302 322 311 296 C318 262 320 225 316 188 C310 150 300 120 280 100 C262 92 240 88 210 88 Z" fill="url(#skin)"/>
<g clip-path="url(#faceclip)">
<ellipse cx="198" cy="150" rx="48" ry="38" fill="#ecb898" opacity="0.7" filter="url(#b14)"/>
<ellipse cx="114" cy="200" rx="16" ry="75" fill="#955c40" opacity="0.65" filter="url(#b8)"/>
<ellipse cx="312" cy="215" rx="20" ry="80" fill="#955c40" opacity="0.7" filter="url(#b8)"/>
<ellipse cx="165" cy="225" rx="34" ry="16" fill="#a26646" opacity="0.5" filter="url(#b4)"/>
<ellipse cx="263" cy="231" rx="34" ry="16" fill="#a26646" opacity="0.5" filter="url(#b4)"/>
<path d="M145 240 C158 250 180 252 195 244" stroke="#a06648" stroke-width="3" fill="none" opacity="0.45" filter="url(#b2)"/>
<path d="M238 246 C250 256 272 258 290 250" stroke="#a06648" stroke-width="3" fill="none" opacity="0.45" filter="url(#b2)"/>
<ellipse cx="155" cy="285" rx="30" ry="24" fill="#e8ac8e" opacity="0.75" filter="url(#b8)"/>
<ellipse cx="270" cy="290" rx="24" ry="22" fill="#dc9e7e" opacity="0.6" filter="url(#b8)"/>
<!-- nose -->
<path d="M197 232 C193 255 188 278 184 298" stroke="#9a6248" stroke-width="9" fill="none" opacity="0.5" filter="url(#b4)"/>
<path d="M228 238 C232 258 238 280 242 300" stroke="#a86e52" stroke-width="6" fill="none" opacity="0.4" filter="url(#b4)"/>
<ellipse cx="213" cy="270" rx="8" ry="28" fill="#e0aa88" opacity="0.6" filter="url(#b4)"/>
<ellipse cx="212" cy="299" rx="14" ry="12" fill="#e4ae8e" opacity="0.75" filter="url(#b4)"/>
<path d="M184 284 C180 296 180 306 186 310" stroke="#8a5440" stroke-width="3" fill="none" opacity="0.5" filter="url(#b2)"/>
<path d="M241 285 C246 296 246 306 240 312" stroke="#8a5440" stroke-width="3" fill="none" opacity="0.45" filter="url(#b2)"/>
<path d="M183 290 C178 302 165 312 142 320" stroke="#8e5840" stroke-width="4" fill="none" opacity="0.3" filter="url(#b2)"/>
<path d="M242 282 C250 300 256 322 262 340" stroke="#8e5840" stroke-width="4" fill="none" opacity="0.45" filter="url(#b2)"/>

</g>
<path d="M188 288 C181 294 180 304 186 309" stroke="#8a5038" stroke-width="2.2" fill="none" opacity="0.55" filter="url(#b1)"/>
<path d="M238 290 C245 296 246 306 239 312" stroke="#8a5038" stroke-width="2.2" fill="none" opacity="0.5" filter="url(#b1)"/>
<ellipse cx="213" cy="300" rx="12" ry="10" fill="#eebb9c" opacity="0.6" filter="url(#b2)"/>
<ellipse cx="213" cy="316" rx="18" ry="3" fill="#7a4a38" opacity="0.5" filter="url(#b2)"/>
<path d="M107 240 C108 216 112 184 118 155 C122 135 126 123 135 112 C150 98 172 90 210 88 C240 88 262 92 280 100 C298 116 308 150 313 188 C316 215 317 230 316 245" stroke="#8c7468" stroke-width="5" fill="none" opacity="0.55" filter="url(#b2)"/>
<ellipse cx="192" cy="306" rx="8" ry="3.5" fill="#4e2c22" filter="url(#b1)"/>
<ellipse cx="231" cy="310" rx="7" ry="3" fill="#5a3426" filter="url(#b1)"/>
<!-- sideburn stubble -->
<path d="M107 222 C105 260 104 300 107 330" stroke="#8e8a88" stroke-width="5" fill="none" opacity="0.75" filter="url(#b2)"/>
<path d="M318 226 C318 260 316 285 311 302" stroke="#8e8a88" stroke-width="6" fill="none" opacity="0.8" filter="url(#b2)"/>
<!-- beard -->
<g clip-path="url(#faceclip)">
<g mask="url(#beardmask)">
<rect x="95" y="280" width="225" height="160" fill="url(#beardg)"/>
<rect x="95" y="280" width="225" height="160" fill="#fff" filter="url(#texW)" opacity="0.6"/>
<rect x="95" y="280" width="225" height="160" fill="#fff" filter="url(#texD)" opacity="0.4"/>
</g>
</g>
<!-- mustache -->
<path d="M136 330 C148 318 168 308 188 306 C198 309 205 314 213 316 C222 313 234 310 246 315 C256 321 262 332 265 345 C245 348 225 345 205 342 C185 340 165 340 150 337 C142 335 138 333 136 330 Z" fill="#aca49e" filter="url(#b1)"/>
<path d="M165 320 C185 316 210 320 248 328" stroke="#7a706a" stroke-width="5" fill="none" opacity="0.35" filter="url(#b2)"/>
<g clip-path="url(#mclip)"><rect x="130" y="300" width="140" height="50" fill="#fff" filter="url(#texW)" opacity="0.55"/><rect x="130" y="300" width="140" height="50" fill="#fff" filter="url(#texD)" opacity="0.5"/></g>
<!-- lips -->
<path d="M160 337 C180 340 205 342 250 349 C232 358 205 358 185 352 C172 347 164 342 160 337 Z" fill="#c98a7a" filter="url(#b1)"/>
<path d="M160 337 C180 340 205 342 250 349" stroke="#6a3c32" stroke-width="1.8" fill="none" filter="url(#b1)"/>
<!-- brows -->
<path d="M132 216 C142 206 158 199 170 199.5 C180 200 190 202 196 204 L194 210 C184 207 172 206 162 207 C152 209 142 214 135 220 Z" fill="#584640" filter="url(#b1)"/>
<path d="M236 206 C248 202 260 200 270 202 C282 205 290 210 296 217 L292 221 C284 214 274 210 264 209 C256 209 246 210 238 213 Z" fill="#584640" filter="url(#b1)"/>
<!-- eyes -->
<path d="M138 227 C150 215 178 212 195 228 C180 230 156 230 138 227 Z" fill="#9c6650" opacity="0.45" filter="url(#b2)"/>
<path d="M232 234 C246 222 275 220 290 237 C276 236 252 236 232 234 Z" fill="#9c6650" opacity="0.45" filter="url(#b2)"/>
<g clip-path="url(#eyeL)">
<rect x="138" y="215" width="60" height="22" fill="#b8988a"/>
<circle cx="166" cy="227.5" r="9.3" fill="#4a2c1c"/>
<circle cx="166" cy="227.5" r="4.2" fill="#24140c"/>
<circle cx="166.5" cy="223.3" r="1.4" fill="#f2f2f2"/>
<rect x="138" y="215" width="60" height="7" fill="#6a4438" opacity="0.55"/>
<rect x="138" y="232" width="60" height="5" fill="#c49484" opacity="0.7"/>
</g>
<g clip-path="url(#eyeR)">
<rect x="232" y="222" width="60" height="22" fill="#b8988a"/>
<circle cx="266" cy="233" r="9.3" fill="#4a2c1c"/>
<circle cx="266" cy="233" r="4.2" fill="#24140c"/>
<circle cx="265" cy="229.5" r="1.4" fill="#f2f2f2"/>
<rect x="232" y="222" width="60" height="7" fill="#6a4438" opacity="0.55"/>
<rect x="232" y="238" width="60" height="5" fill="#c49484" opacity="0.7"/>
</g>
<path d="M140.5 227.5 C150 221 160 219.5 166 219.8 C176 220.5 185 224 191 229.5" stroke="#2a1812" stroke-width="2.6" fill="none" filter="url(#b1)"/>
<path d="M234.5 234.2 C245 229 255 227 263 227.2 C273 228 281 232 286 237.3" stroke="#2a1812" stroke-width="2.6" fill="none" filter="url(#b1)"/>
<path d="M146 233 C156 236 176 237 193 235" stroke="#9a6250" stroke-width="1.2" fill="none" opacity="0.5" filter="url(#b1)"/>
<path d="M240 239 C252 242 270 242 284 240" stroke="#9a6250" stroke-width="1.2" fill="none" opacity="0.5" filter="url(#b1)"/>
<!-- shirt -->
<path d="M0 418 C15 412 30 407 47 404 C52 425 65 448 98 474 C130 495 170 510 210 517 C245 512 275 495 290 470 C298 445 296 415 288 394 C310 402 345 418 382 425 C400 430 410 433 420 437 L420 588 L0 588 Z" fill="#f6f6f6"/>
<path d="M330 430 C350 470 365 520 372 588" stroke="#dedede" stroke-width="4" fill="none" opacity="0.6" filter="url(#b4)"/>
<path d="M20 440 C35 480 45 530 50 588" stroke="#e2e2e2" stroke-width="5" fill="none" opacity="0.6" filter="url(#b4)"/>
<path d="M400 440 C405 480 410 540 412 588" stroke="#e0e0e0" stroke-width="4" fill="none" opacity="0.5" filter="url(#b4)"/>
<path d="M47 404 C52 425 65 448 98 474 C130 495 170 510 210 517 C245 512 275 495 290 470 C298 445 296 415 288 394" stroke="#d8d8d8" stroke-width="3" fill="none" opacity="0.6" filter="url(#b2)"/>
</svg>

</div>
<svg class="a" style="left:0;top:0" width="1280" height="720">
<rect x="358.5" y="118.5" width="419" height="587" fill="none" stroke="#b8c8ee" stroke-width="1"/>
<g fill="#e8eeff" stroke="#203050" stroke-width="1">
<rect x="355.5" y="116" width="4.5" height="4.5"/><rect x="565.5" y="116" width="4.5" height="4.5"/><rect x="775" y="116" width="4.5" height="4.5"/>
<rect x="355.5" y="409.5" width="4.5" height="4.5"/><rect x="775" y="409.5" width="4.5" height="4.5"/>
<rect x="355.5" y="703.5" width="4.5" height="4.5"/><rect x="565.5" y="703.5" width="4.5" height="4.5"/><rect x="775" y="703.5" width="4.5" height="4.5"/>
</g>
</svg>
</body></html>
